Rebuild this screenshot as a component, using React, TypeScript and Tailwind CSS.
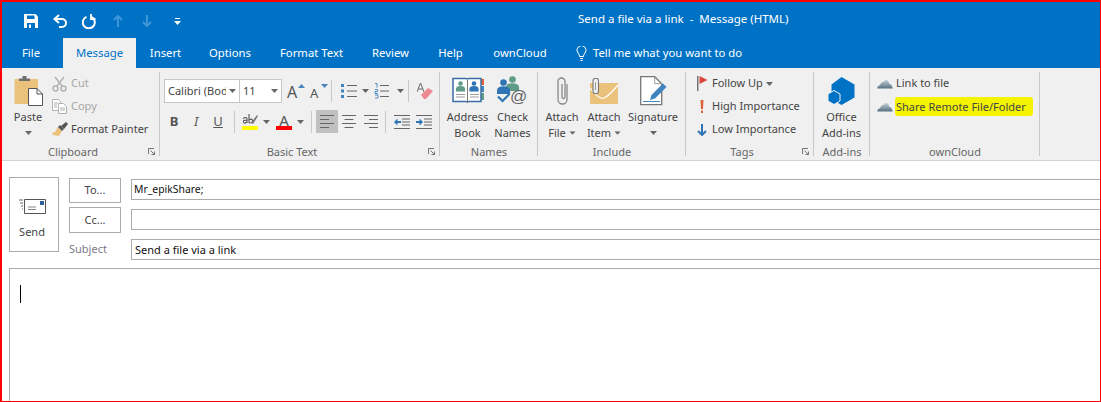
import React from 'react';

const Caret = ({ className = '' }: { className?: string }) => (
  <svg width="7" height="4" viewBox="0 0 7 4" className={'shrink-0 ' + className}>
    <path d="M0 0h7L3.500 4z" fill="#666" />
  </svg>
);

// quick access toolbar
const SaveIcon = () => (
  <svg width="14" height="14" viewBox="0 0 14 14">
    <path d="M0 0h11.500L14 2.500V14H0z" fill="#fff" />
    <path d="M3 1.500h7.500v3.500H3zM3 9h8v5H3z" fill="#0072c6" />
    <path d="M5 10.500h2v3.500H5z" fill="#fff" />
  </svg>
);
const UndoIcon = () => (
  <svg width="15" height="14" viewBox="0 0 15 14" fill="none" stroke="#fff" strokeWidth="2">
    <path d="M6 1L1.500 5 6 9" />
    <path d="M2 5h7a4 4 0 0 1 0 8H6" />
  </svg>
);
const RedoIcon = () => (
  <svg width="14" height="15" viewBox="0 0 14 15" fill="none" stroke="#fff" strokeWidth="2">
    <path d="M4.500 2.800a6 6 0 1 0 5 .2" />
    <path d="M9 0v5h4.500" strokeWidth="1.800" />
  </svg>
);
const ArrowDim = ({ down = false }: { down?: boolean }) => (
  <svg width="10" height="12" viewBox="0 0 10 12" fill="none" stroke="#3f97d8" strokeWidth="2" className={down ? 'rotate-180' : ''}>
    <path d="M1 5l4-4 4 4M5 1v11" />
  </svg>
);
const Customize = () => (
  <svg width="7" height="7" viewBox="0 0 7 7" fill="#fff">
    <path d="M1 0h5v1H1zM0 3h7L3.500 7z" />
  </svg>
);

// ribbon icons
const PasteIcon = () => (
  <svg width="29" height="30" viewBox="0 0 29 30" className="ml-[1px]">
    <path d="M1.500 3H23q1 0 1 1v24H1.500q-1 0-1-1V4q0-1 1-1z" fill="#eac27c" />
    <path d="M5 5V2.500h3.500V0h4v2.500H16V5z" fill="#6e6e6e" />
    <path d="M14.500 12.500h8.500l5.500 5.500v11.500h-14z" fill="#fff" stroke="#555" />
    <path d="M23 12.500V18h5.500" fill="none" stroke="#555" />
  </svg>
);
const CutIcon = () => (
  <svg width="15" height="16" viewBox="0 0 15 16" fill="none" stroke="#b0b0b0" strokeWidth="1.400">
    <path d="M3 1l7 9M12 1L5 10" />
    <circle cx="3.500" cy="12.500" r="2.500" />
    <circle cx="11.500" cy="12.500" r="2.500" />
  </svg>
);
const CopyIcon = () => (
  <svg width="15" height="15" viewBox="0 0 15 15" fill="#fff" stroke="#b0b0b0">
    <path d="M.5.5h6l2 2v9h-8z" />
    <path d="M6.500 4.500h5l3 3v7h-8z" />
    <path d="M2 4h4M2 6h3M2 8h3M8 9h5M8 11h5" fill="none" />
  </svg>
);
const BrushIcon = () => (
  <svg width="16" height="15" viewBox="0 0 16 15">
    <path d="M6 5l4 4-3 5-6-1-1-2 3-1z" fill="#eac27c" />
    <path d="M6 5l2-2 4 4-2 2z" fill="#555" />
    <path d="M9 4l5-4 2 2-4 5z" fill="#555" />
  </svg>
);
const GrowA = ({ shrink = false }: { shrink?: boolean }) => (
  <div className="relative flex items-end h-[18px] w-[18px]">
    <span className={shrink ? 'text-[13px] leading-[14px] text-[#555]' : 'text-[16px] leading-[16px] text-[#555]'}>A</span>
    <svg width="7" height="4" viewBox="0 0 7 4" className={shrink ? 'absolute right-0 top-[2px] rotate-180' : 'absolute right-0 top-[2px]'}>
      <path d="M0 4h7L3.500 0z" fill="#4a86bd" />
    </svg>
  </div>
);
const BulletsIcon = () => (
  <svg width="18" height="16" viewBox="0 0 18 16">
    <path d="M1 1h3v3H1zM1 6.500h3v3H1zM1 12h3v3H1z" fill="#3f83bf" />
    <path d="M7 2h10v1H7zM7 7.500h10v1H7zM7 13h10v1H7z" fill="#666" />
  </svg>
);
const NumberingIcon = () => (
  <svg width="16" height="16" viewBox="0 0 16 16">
    <path d="M1 .5h2v4M1 6.500h2.500v2H1v2h3M1 12h3v3H1" fill="none" stroke="#3f83bf" strokeWidth=".9" />
    <path d="M6 2h9v1H6zM6 7.500h9v1H6zM6 13h9v1H6z" fill="#666" />
  </svg>
);
const ClearIcon = () => (
  <svg width="16" height="17" viewBox="0 0 16 17">
    <path d="M0 9L3.500 0 7 9M1.500 6h4" fill="none" stroke="#666" />
    <path d="M4 12l7-7 5 3-7 8H7z" fill="#f08a92" />
  </svg>
);
const HighlightIcon = () => (
  <div className="flex flex-col items-center w-[16px]">
    <svg width="16" height="12" viewBox="0 0 16 12">
      <path d="M1 4.500q3-2 4 0V9M5 6.500q-4-1-3.500 1.500t3.500 0M7 0v9M7 6q3-2 3.500 .5T7 9" fill="none" stroke="#555" strokeWidth="1.100" />
      <path d="M9 9l6-8 1 1-5 8z" fill="#777" />
    </svg>
    <div className="h-[4px] w-[16px] bg-[#ffff00]" />
  </div>
);
const FontColorIcon = () => (
  <div className="flex flex-col items-center w-[16px]">
    <span className="h-[12px] text-[15px] leading-[13px] text-[#555]">A</span>
    <div className="h-[4px] w-[16px] bg-[#ff0000]" />
  </div>
);
const AlignIcon = ({ kind }: { kind: 'left' | 'center' | 'right' }) => {
  const d = {
    left: 'M0 0h14v1H0zM0 4h9v1H0zM0 8h14v1H0zM0 12h9v1H0z',
    center: 'M0 0h14v1H0zM2.500 4h9v1h-9zM0 8h14v1H0zM2.500 12h9v1h-9z',
    right: 'M0 0h14v1H0zM5 4h9v1H5zM0 8h14v1H0zM5 12h9v1H5z',
  }[kind];
  return (
    <svg width="14" height="13" viewBox="0 0 14 13">
      <path d={d} fill="#666" />
    </svg>
  );
};
const IndentIcon = ({ out = false }: { out?: boolean }) => (
  <svg width="16" height="14" viewBox="0 0 16 14">
    <path d="M0 0h16v1H0zM8 3.500h8v1H8zM8 6.500h8v1H8zM8 9.500h8v1H8zM0 13h16v1H0z" fill="#666" />
    <path d={out ? 'M0 7l3.500-3.500V6H7v2H3.500v2.500z' : 'M7 7L3.500 3.500V6H0v2h3.500v2.500z'} fill="#2f75b5" />
  </svg>
);
const Person = ({ x, y, r, c }: { x: number; y: number; r: number; c: string }) => (
  <g fill={c}>
    <circle cx={x} cy={y} r={r} />
    <path d={`M${x - 2 * r} ${y + 3.5 * r}v-${r}q0-${1.4 * r} ${2 * r}-${1.4 * r}t${2 * r} ${1.4 * r}v${r}z`} />
  </g>
);
const BookIcon = () => (
  <svg width="32" height="27" viewBox="0 0 32 27">
    <path d="M29 2h3v6h-3z" fill="#d9603b" />
    <path d="M29 9h3v6h-3z" fill="#3f83bf" />
    <path d="M29 16h3v7h-3z" fill="#5e9c85" />
    <path d="M1 1.500h13q1.500 0 1.500 1 0-1 1.500-1h12v23H17q-1.500 0-1.500 1 0-1-1.500-1H1z" fill="#fff" stroke="#3b6ea5" strokeWidth="1.500" />
    <path d="M15.500 3v23" stroke="#777" />
    <Person x={8.500} y={6.500} r={2.300} c="#5e9c85" />
    <Person x={22} y={6.500} r={2.300} c="#2f75b5" />
    <path d="M4 17.500h9M4 20h9M18 17.500h9M18 20h9" stroke="#999" />
  </svg>
);
const CheckNamesIcon = () => (
  <svg width="31" height="29" viewBox="0 0 31 29">
    <Person x={15.500} y={3.500} r={3.300} c="#5e9c85" />
    <Person x={6.500} y={6.500} r={3.300} c="#2f75b5" />
    <path d="M1 20.500l4.500 4.500 7-7" fill="none" stroke="#2f75b5" strokeWidth="2.200" />
    <text x="13" y="26" fontSize="17" fill="#666" fontFamily="'Liberation Sans', sans-serif">@</text>
  </svg>
);
const ClipIcon = () => (
  <svg width="11" height="28" viewBox="0 0 11 28" fill="none" stroke="#888" strokeWidth="1.300">
    <path d="M10 7v15.500a4.500 4.500 0 0 1-9 0V4.500a3.500 3.500 0 0 1 7 0V20a1.500 1.500 0 0 1-3 0V7" />
  </svg>
);
const AttachItemIcon = () => (
  <svg width="28" height="26" viewBox="0 0 28 26">
    <path d="M0 5h28v21H0z" fill="#eac27c" />
    <path d="M0 10q9 12 14 10t14-13" fill="none" stroke="#fff" strokeWidth="1.200" />
    <path d="M8.500 3v10a2.500 2.500 0 0 1-5.500 0V3a2.500 2.500 0 0 1 5.500 0z" fill="#f0f0f0" stroke="#777" strokeWidth="1.100" />
    <path d="M5.500 4v8" stroke="#999" />
  </svg>
);
const SignatureIcon = () => (
  <svg width="27" height="30" viewBox="0 0 27 30">
    <path d="M.7.7h14l7 7v21H.7z" fill="#fff" stroke="#777" strokeWidth="1.300" />
    <path d="M14.700.7v7h7" fill="none" stroke="#999" />
    <path d="M10 24l1.500-5L23 7.500l3.500 3.500L15 22.500z" fill="#3f83bf" />
    <path d="M3 25.500h17" stroke="#3f83bf" />
  </svg>
);
const FlagIcon = () => (
  <svg width="11" height="15" viewBox="0 0 11 15">
    <path d="M0 0h1.500v15H0z" fill="#777" />
    <path d="M2.500 0l8 4-8 4z" fill="#d9483b" />
  </svg>
);
const BangIcon = () => (
  <svg width="4" height="13" viewBox="0 0 4 13" fill="#d9603b">
    <path d="M.5 0h3L3 9H1zM1 10.500h2V13H1z" />
  </svg>
);
const DownArrowIcon = () => (
  <svg width="10" height="12" viewBox="0 0 10 12" fill="none" stroke="#2f75b5" strokeWidth="2">
    <path d="M5 0v11M1 7l4 4 4-4" />
  </svg>
);
const OfficeIcon = () => (
  <svg width="27" height="28" viewBox="0 0 27 28">
    <path d="M13.500 0L26.500 7.500V20.500L13.500 28 3.500 22V7.500z" fill="#0072c6" />
    <path d="M6 13.500l6 3.500v7l-6 3.500-6-3.500v-7z" fill="#0072c6" stroke="#f0f0f0" />
  </svg>
);
const CloudIcon = () => (
  <svg width="16" height="10" viewBox="0 0 17 11">
    <defs>
      <linearGradient id="cloudFill" x1="0" y1="0" x2="0" y2="1">
        <stop offset="0" stopColor="#c4d0d8" />
        <stop offset="1" stopColor="#56707f" />
      </linearGradient>
    </defs>
    <path d="M0 10.500q0-3 3-3.500Q4 3 7 3q1-2.500 4-1.500 2 1 2 3.500 3 .5 4 5.500z" fill="url(#cloudFill)" />
  </svg>
);
const Launcher = () => (
  <svg width="7" height="7" viewBox="0 0 7 7" className="absolute right-[5px] bottom-[5px]" fill="none" stroke="#777">
    <path d="M.5 6V.5H6" />
    <path d="M2.500 2.500l4 4M6.500 3.500v3h-3" />
  </svg>
);

const Group = ({ w, label, launcher, children }: { w: number; label: string; launcher?: boolean; children: React.ReactNode }) => (
  <div className="relative flex flex-col h-[92px] pt-[4px]" style={{ width: w }}>
    <div className="flex-1 min-h-0">{children}</div>
    <div className={launcher ? 'h-[16px] pr-[16px] text-center text-[#666] leading-[16px]' : 'h-[16px] text-center text-[#666] leading-[16px]'}>{label}</div>
    {launcher && <Launcher />}
    <div className="absolute right-0 top-[4px] bottom-[4px] w-px bg-[#c8c8c8]" />
  </div>
);

const BigButton = ({ w, icon, lines, caret }: { w: number; icon: React.ReactNode; lines: string[]; caret?: boolean }) => (
  <div className="flex flex-col items-center text-[#444]" style={{ width: w }}>
    <div className="h-[37px] flex items-center justify-center">{icon}</div>
    {lines.map((t, i) => (
      <div key={t} className="h-[16px] leading-[16px] flex items-center gap-[3px] whitespace-nowrap">
        {t}
        {caret && i === lines.length - 1 && <Caret className="scale-90" />}
      </div>
    ))}
    {lines.length === 1 && <Caret className="mt-[6px]" />}
  </div>
);

const SmallRow = ({ icon, children, dim }: { icon: React.ReactNode; children: React.ReactNode; dim?: boolean }) => (
  <div className={dim ? 'h-[23px] flex items-center whitespace-nowrap text-[#a6a6a6]' : 'h-[23px] flex items-center whitespace-nowrap text-[#444]'}>
    {icon}
    {children}
  </div>
);

const VSep = ({ className = '' }: { className?: string }) => <div className={'w-px h-[22px] bg-[#c8c8c8] shrink-0 ' + className} />;

const Field = ({ value, className = '' }: { value?: string; className?: string }) => (
  <div className={'h-[21px] w-[990px] border border-[#ababab] bg-white leading-[19px] text-[#111] whitespace-nowrap ' + className}>{value}</div>
);

const tabs: { name: string; w: number; cls?: string }[] = [
  { name: 'File', w: 61, cls: 'pr-[3px]' },
  { name: 'Message', w: 73, cls: 'bg-[#f0f0f0] text-[#0072c6]' },
  { name: 'Insert', w: 59 },
  { name: 'Options', w: 70 },
  { name: 'Format Text', w: 93 },
  { name: 'Review', w: 65 },
  { name: 'Help', w: 55 },
  { name: 'ownCloud', w: 84 },
];

export default function App() {
  return (
    <div className="w-[1101px] h-[402px] overflow-hidden border-t-2 border-l-2 border-r border-b border-[#ff0000] bg-white text-[11px] font-['Noto_Sans','Liberation_Sans',sans-serif]">
      {/* title bar */}
      <div className="h-[36px] bg-[#0072c6] flex items-center text-white">
        <div className="flex items-center w-[550px] pl-[22px] pt-[2px]">
          <SaveIcon />
          <div className="ml-[15px]"><UndoIcon /></div>
          <div className="ml-[14px]"><RedoIcon /></div>
          <div className="ml-[17px]"><ArrowDim /></div>
          <div className="ml-[19px]"><ArrowDim down /></div>
          <div className="ml-[22px]"><Customize /></div>
        </div>
        <div className="ml-[26px] whitespace-pre text-[11.5px] -mt-[2px]">Send a file via a link  -  Message (HTML)</div>
      </div>

      {/* tabs */}
      <div className="h-[30px] bg-[#0072c6] flex text-white text-[11.3px]">
        {tabs.map((t) => (
          <div key={t.name} className={'flex items-center justify-center ' + (t.cls ?? '')} style={{ width: t.w }}>{t.name}</div>
        ))}
        <div className="flex items-center pl-[14px]">
          <svg width="11" height="15" viewBox="0 0 11 15" fill="none" stroke="#fff">
            <path d="M3.500 10.500Q3.500 8.500 2 7A4.500 4.500 0 1 1 9 7Q7.500 8.500 7.500 10.500zM4 12.500h3M4.500 14.500h2" />
          </svg>
          <span className="ml-[6px]">Tell me what you want to do</span>
        </div>
      </div>

      {/* ribbon */}
      <div className="h-[93px] flex bg-[#f0f0f0] border-b border-[#d2d2d2]">
        <Group w={158} label="Clipboard" launcher>
          <div className="flex pl-[7px]">
            <div className="w-[43px]">
              <BigButton w={38} icon={<PasteIcon />} lines={['Paste']} />
            </div>
            <div>
              <SmallRow dim icon={<CutIcon />}><span className="ml-[4px]">Cut</span></SmallRow>
              <SmallRow dim icon={<CopyIcon />}><span className="ml-[4px]">Copy</span></SmallRow>
              <SmallRow icon={<BrushIcon />}><span className="ml-[3px]">Format Painter</span></SmallRow>
            </div>
          </div>
        </Group>

        <Group w={280} label="Basic Text" launcher>
          <div className="flex items-center h-[24px] mt-[7px] pl-[4px] text-[#444]">
            <div className="w-[76px] h-[24px] shrink-0 border border-[#c6c6c6] bg-white flex items-center justify-between px-[3px] whitespace-nowrap overflow-hidden">
              <span className="w-[58px] overflow-hidden">Calibri (Body)</span>
              <Caret />
            </div>
            <div className="w-[43px] h-[24px] shrink-0 ml-[-1px] border border-[#c6c6c6] bg-white flex items-center justify-between px-[3px]">
              11
              <Caret />
            </div>
            <div className="ml-[5px]"><GrowA /></div>
            <div className="ml-[5px]"><GrowA shrink /></div>
            <VSep className="ml-[3px]" />
            <div className="ml-[8px]"><BulletsIcon /></div>
            <Caret className="ml-[4px]" />
            <div className="ml-[5px]"><NumberingIcon /></div>
            <Caret className="ml-[7px]" />
            <VSep className="ml-[4px]" />
            <div className="ml-[8px]"><ClearIcon /></div>
          </div>
          <div className="flex items-center h-[23px] mt-[7px] pl-[3px] text-[#555]">
            <span className="w-[22px] text-center font-bold text-[13px]">B</span>
            <span className="w-[22px] text-center italic text-[13px]">I</span>
            <span className="w-[22px] text-center underline text-[13px]">U</span>
            <VSep className="ml-[5px]" />
            <div className="ml-[7px]"><HighlightIcon /></div>
            <Caret className="ml-[5px]" />
            <div className="ml-[6px]"><FontColorIcon /></div>
            <Caret className="ml-[5px]" />
            <VSep className="ml-[7px]" />
            <div className="ml-[4px] w-[22px] h-[23px] bg-[#c0c0c0] flex items-center justify-center"><AlignIcon kind="left" /></div>
            <div className="ml-[4px]"><AlignIcon kind="center" /></div>
            <div className="ml-[8px]"><AlignIcon kind="right" /></div>
            <VSep className="ml-[7px]" />
            <div className="ml-[8px]"><IndentIcon out /></div>
            <div className="ml-[6px]"><IndentIcon /></div>
          </div>
        </Group>

        <Group w={98} label="Names">
          <div className="flex pl-[4px]">
            <BigButton w={47} icon={<BookIcon />} lines={['Address', 'Book']} />
            <BigButton w={43} icon={<CheckNamesIcon />} lines={['Check', 'Names']} />
          </div>
        </Group>

        <Group w={148} label="Include">
          <div className="flex pl-[3px]">
            <BigButton w={42} icon={<ClipIcon />} lines={['Attach', 'File']} caret />
            <BigButton w={42} icon={<AttachItemIcon />} lines={['Attach', 'Item']} caret />
            <BigButton w={56} icon={<SignatureIcon />} lines={['Signature']} />
          </div>
        </Group>

        <Group w={128} label="Tags" launcher>
          <div className="pl-[8px]">
            <SmallRow icon={<div className="w-[14px] flex justify-center ml-[1px] mr-[3px]"><FlagIcon /></div>}>
              Follow Up<Caret className="ml-[3px]" />
            </SmallRow>
            <SmallRow icon={<div className="w-[14px] flex justify-center ml-[1px] mr-[3px]"><BangIcon /></div>}>High Importance</SmallRow>
            <SmallRow icon={<div className="w-[14px] flex justify-center ml-[1px] mr-[3px]"><DownArrowIcon /></div>}>Low Importance</SmallRow>
          </div>
        </Group>

        <Group w={56} label="Add-ins">
          <BigButton w={55} icon={<OfficeIcon />} lines={['Office', 'Add-ins']} />
        </Group>

        <Group w={170} label="ownCloud">
          <div className="pl-[7px]">
            <SmallRow icon={<CloudIcon />}><span className="ml-[3px]">Link to file</span></SmallRow>
            <SmallRow icon={<CloudIcon />}>
              <span className="ml-[2px] pl-[1px] pr-[7px] leading-[19px] bg-[#f4f400] rounded-[3px]">Share Remote File/Folder</span>
            </SmallRow>
          </div>
        </Group>
      </div>

      {/* compose */}
      <div className="flex pl-[7px] pt-[16px]">
        <div className="w-[50px] h-[75px] shrink-0 border border-[#ababab] flex flex-col items-center pr-[4px] text-[#444]">
          <svg width="27" height="15" viewBox="0 0 27 15" className="mt-[21px]">
            <path d="M5.500.5h21v14h-21z" fill="#fff" stroke="#555" />
            <path d="M21 2h4v4h-4z" fill="#2f5f94" />
            <path d="M9 8h8M9 10.500h8" stroke="#888" />
            <path d="M0 1h4M1 4h3M2 7h2M3 10h1" stroke="#666" />
          </svg>
          <span className="mt-[10px]">Send</span>
        </div>
        <div className="flex flex-col ml-[10px] w-[52px] shrink-0">
          <div className="h-[25px] mt-[1px] w-[52px] border border-[#ababab] flex items-center justify-center text-[#444]">To...</div>
          <div className="h-[26px] mt-[4px] w-[52px] border border-[#ababab] flex items-center justify-center text-[#444]">Cc...</div>
          <div className="mt-[6px] text-[#7a7a8a] leading-[20px]">Subject</div>
        </div>
        <div className="flex flex-col ml-[10px] pt-[2px] gap-[9px] shrink-0">
          <Field value="Mr_epikShare;" className="pl-[2px] text-[10.4px]" />
          <Field />
          <Field value="Send a file via a link" className="pl-[3px]" />
        </div>
      </div>
      <div className="mt-[8px] ml-[7px] h-[140px] w-[1100px] border border-[#ababab] pl-[10px] pt-[16px]">
        <div className="w-px h-[18px] bg-black" />
      </div>
    </div>
  );
}
